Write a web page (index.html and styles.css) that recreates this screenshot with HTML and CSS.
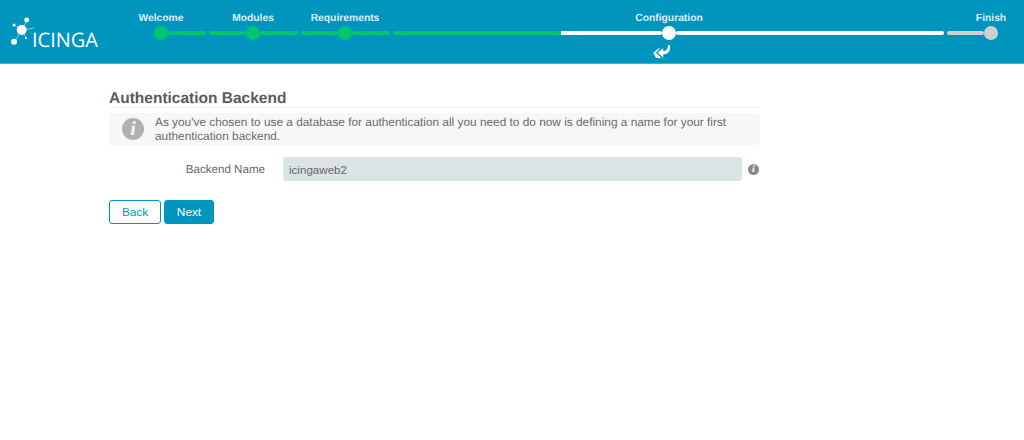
FILE: index.html
```html
<!DOCTYPE html>
<html lang="en">
<head>
    <meta charset="UTF-8">
    <title>Icinga Web 2 Setup Wizard</title>
    <link rel="stylesheet" href="styles.css">
</head>
<body>
    <div class="header">
        <div class="logo">
            <svg class="logo-mark" width="32" height="36" viewBox="0 0 32 36">
                <g stroke="#fff" stroke-width="0.7" opacity="0.75">
                    <line x1="19" y1="18" x2="24" y2="8"/>
                    <line x1="19" y1="18" x2="11" y2="13"/>
                    <line x1="19" y1="18" x2="11" y2="30"/>
                    <line x1="19" y1="18" x2="31" y2="16"/>
                    <line x1="19" y1="18" x2="23" y2="26"/>
                </g>
                <circle cx="18.700" cy="18" r="5" fill="#fff"/>
                <circle cx="23.700" cy="8" r="2.400" fill="#fff"/>
                <circle cx="11" cy="13" r="1.500" fill="#fff"/>
                <circle cx="11" cy="29.700" r="3" fill="#fff"/>
                <circle cx="23" cy="26" r="1" fill="#fff"/>
            </svg>
            <span class="logo-text">ICINGA</span>
        </div>
        <div class="steps">
            <div class="step">
                <div class="node done"><span class="step-label">Welcome</span><span class="dot"></span></div>
                <div class="seg done seg-right"></div>
            </div>
            <div class="step">
                <div class="seg done seg-left"></div>
                <div class="node done"><span class="step-label">Modules</span><span class="dot"></span></div>
                <div class="seg done seg-right"></div>
            </div>
            <div class="step">
                <div class="seg done seg-left"></div>
                <div class="node done"><span class="step-label">Requirements</span><span class="dot"></span></div>
                <div class="seg done seg-right"></div>
            </div>
            <div class="step">
                <div class="seg seg-split"></div>
                <div class="node active">
                    <span class="step-label">Configuration</span>
                    <span class="dot"></span>
                    <svg class="arrow" width="18" height="16" viewBox="0 0 18 16">
                        <path fill="#fff" d="M17 1c.6 4.500-.6 9.200-6.800 9.400V13.800L4.800 8.600 10.200 4.200V7c3 0 4.600-1.500 4.800-6z"/>
                        <path fill="#fff" d="M7.500 4.200 2.900 8.600 7.500 13.300 8.600 14.300 3 14 0.300 8.700 5 4.700z"/>
                    </svg>
                </div>
                <div class="seg active seg-long"></div>
            </div>
            <div class="step last">
                <div class="seg todo seg-left"></div>
                <div class="node todo"><span class="step-label">Finish</span><span class="dot"></span></div>
            </div>
        </div>
    </div>

    <div class="content">
        <h2>Authentication Backend</h2>
        <div class="note">
            <span class="note-icon">i</span>
            <p>As you've chosen to use a database for authentication all you need to do now is defining a name for your first authentication backend.</p>
        </div>
        <div class="field">
            <label for="backendName">Backend Name</label>
            <input type="text" id="backendName" value="icingaweb2">
            <span class="field-icon">i</span>
        </div>
        <div class="buttons">
            <button class="btn-back">Back</button>
            <button class="btn-next">Next</button>
        </div>
    </div>
</body>
</html>
```
FILE: styles.css
```css
body {
    margin: 0;
    font-family: "Liberation Sans", Arial, sans-serif;
    text-rendering: geometricPrecision;
    color: #5a5a5a;
    background: #fff;
}
.header {
    height: 63px;
    background: #0095bf;
    border-bottom: 1px solid #3fb4d6;
    display: flex;
}
.logo {
    width: 154px;
    display: flex;
    align-items: flex-start;
    padding: 12px 0 0 3px;
    box-sizing: border-box;
}
.logo-mark {
    flex-shrink: 0;
}
.logo-text {
    color: #fff;
    font-family: "Open Sans", sans-serif;
    font-size: 20px;
    line-height: 20px;
    margin: 18px 0 0 -3px;
}
.steps {
    display: flex;
    padding-top: 26px;
    align-items: flex-start;
}
.step {
    display: flex;
    margin-right: 3px;
}
.step.last {
    margin-right: 0;
}
.node {
    width: 14px;
    display: flex;
    flex-direction: column;
    align-items: center;
    position: relative;
}
.step-label {
    position: absolute;
    top: -14px;
    color: #d9f0f7;
    font-size: 10.300px;
    font-weight: bold;
    line-height: 14px;
    white-space: nowrap;
}
.dot {
    width: 14px;
    height: 14px;
    border-radius: 50%;
}
.arrow {
    margin-top: 4px;
    margin-left: -14px;
    flex-shrink: 0;
}
.node.done .dot { background: #00c670; }
.node.active .dot { background: #fff; }
.node.todo .dot { background: #d0d0d0; }
.seg {
    height: 4px;
    margin-top: 5px;
    border-radius: 2px;
}
.seg.done { background: #00c670; }
.seg.active { background: #fff; }
.seg.todo { background: #d0d0d0; }
.seg-left { width: 37px; }
.seg-right { width: 38px; }
.seg-split {
    width: 269px;
    background: linear-gradient(to right, #00c670 168px, #fff 168px);
}
.seg-long { width: 268px; }
.content {
    width: 651px;
    margin-left: 109px;
    padding-top: 26px;
}
h2 {
    margin: 0;
    font-size: 15.500px;
    line-height: 17px;
    font-weight: bold;
    border-bottom: 1px solid #f0f0f0;
}
.note {
    margin-top: 5px;
    height: 32px;
    background: #f7f7f7;
    border-radius: 3px;
    display: flex;
    align-items: center;
    padding-left: 13px;
}
.note-icon {
    width: 22px;
    height: 22px;
    border-radius: 50%;
    background: #b0b0b0;
    color: #f7f7f7;
    font-family: "Liberation Serif", serif;
    font-style: italic;
    font-weight: bold;
    font-size: 20px;
    line-height: 22px;
    text-align: center;
    flex-shrink: 0;
}
.note p {
    margin: 0 0 0 11px;
    font-size: 11.850px;
    line-height: 14px;
    color: #6a6a6a;
}
.field {
    margin-top: 12px;
    display: flex;
    align-items: center;
}
.field label {
    width: 156px;
    text-align: right;
    font-size: 11.600px;
    color: #666;
}
.field input {
    margin-left: 18px;
    width: 459px;
    height: 24px;
    box-sizing: border-box;
    border: none;
    border-radius: 3px;
    background: #dae3e6;
    padding: 0 6px;
    font-family: inherit;
    font-size: 11.600px;
    color: #666;
}
.field-icon {
    margin-left: 6px;
    width: 11px;
    height: 11px;
    border-radius: 50%;
    background: #8a8a8a;
    color: #fff;
    font-family: "Liberation Serif", serif;
    font-weight: bold;
    font-style: italic;
    font-size: 10px;
    line-height: 11px;
    text-align: center;
}
.buttons {
    margin-top: 19px;
    display: flex;
    gap: 3px;
}
.buttons button {
    height: 24px;
    box-sizing: border-box;
    border-radius: 3px;
    border: 1px solid #0095bf;
    font-family: inherit;
    font-size: 11.800px;
    padding: 0;
}
.btn-back {
    width: 52px;
    background: #fff;
    color: #0095bf;
}
.btn-next {
    width: 50px;
    background: #0095bf;
    color: #fff;
}
```
